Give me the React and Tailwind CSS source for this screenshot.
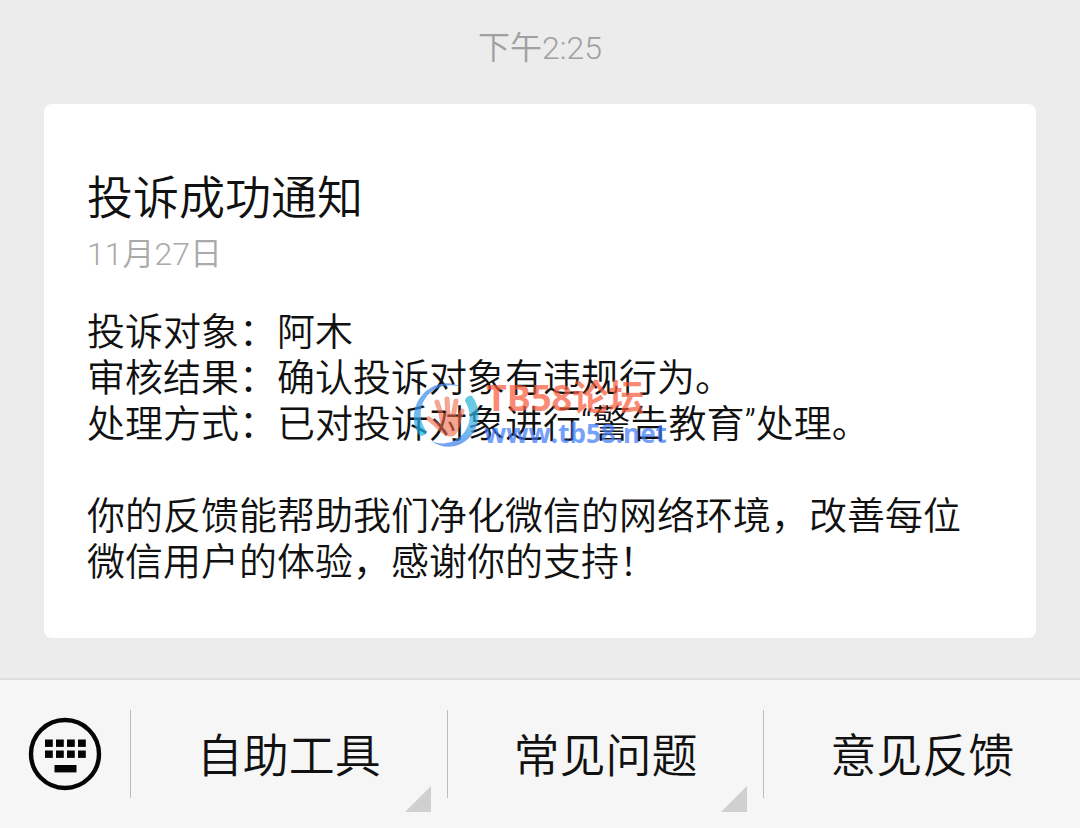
const details = [
  ['投诉对象', '阿木'],
  ['审核结果', '确认投诉对象有违规行为。'],
  ['处理方式', '已对投诉对象进行“警告教育”处理。'],
];

const menu = [
  { label: '自助工具', more: true },
  { label: '常见问题', more: true },
  { label: '意见反馈', more: false },
];

function KeyboardIcon() {
  return (
    <svg viewBox="0 0 74 74" className="size-[74px]" aria-hidden="true">
      <circle cx="37" cy="37" r="34" fill="none" stroke="#050505" strokeWidth="4.4" />
      <g fill="#050505">
        {[17, 28, 39, 50].map((x) => (
          <g key={x}>
            <rect x={x} y="22.5" width="7.8" height="7.4" />
            <rect x={x} y="33.5" width="7.8" height="7.4" />
          </g>
        ))}
        <rect x="26.5" y="48" width="22" height="7.4" />
      </g>
    </svg>
  );
}

function HandLogo() {
  return (
    <svg viewBox="0 0 68 68" className="size-[68px] shrink-0" aria-hidden="true">
      <defs>
        <linearGradient id="ring-left" x1="0" y1="0" x2="0" y2="1">
          <stop offset="0" stopColor="#3a80e8" />
          <stop offset="0.5" stopColor="#3a98ee" />
          <stop offset="1" stopColor="#20b8e4" />
        </linearGradient>
        <linearGradient id="ring-right" x1="0" y1="0" x2="0" y2="1">
          <stop offset="0" stopColor="#20b4d0" />
          <stop offset="0.5" stopColor="#38b4e8" />
          <stop offset="1" stopColor="#3a78e8" />
        </linearGradient>
      </defs>
      <path
        d="M49 8C37 1 22 4 12 14C0 26 -1 44 7 56C10 58 14 56 15 53C7 43 6 28 15 17C24 7 37 4 49 8Z"
        fill="url(#ring-left)"
      />
      <path
        d="M60 17C57 16 53 19 53 22C60 33 59 46 50 56C42 64 30 67 19 62C32 71 47 69 57 59C68 48 70 30 60 17Z"
        fill="url(#ring-right)"
      />
      <g opacity="0.85">
        <g fill="none" stroke="#f0694a" strokeLinecap="round" strokeWidth="5">
          <path d="M30 38L25 23" />
          <path d="M36 38L35 20" />
          <path d="M41 38L44 22" />
          <path d="M46 42L50 32" />
          <path d="M28 48L17 40" />
        </g>
        <path
          d="M27 36C34 33 43 34 49 40C49 47 46 53 42 57C38 58 34 57 31 55C27 52 22 47 18 43C22 43 25 45 28 46Z"
          fill="#f0694a"
        />
      </g>
    </svg>
  );
}

function Watermark() {
  return (
    <div
      aria-hidden="true"
      className="pointer-events-none absolute top-[274px] left-[368px] flex items-center gap-1 whitespace-nowrap font-['Open_Sans','Noto_Sans_CJK_SC',sans-serif] font-bold opacity-70"
    >
      <HandLogo />
      <div>
        <div className="pl-0.5 text-[36px] leading-[40px] text-[#fa5a3c]">TB58论坛</div>
        <div className="text-[26px] leading-[30px] text-[#3c78fa]">www.tb58.net</div>
      </div>
    </div>
  );
}

export default function App() {
  return (
    <div className="flex min-h-screen flex-col bg-[#ececec] font-['Roboto','Noto_Sans_CJK_SC',sans-serif] font-[350] text-[#111]">
      <main className="flex-1 px-11 pt-7 pb-10">
        <time className="block text-center text-[32px] leading-10 text-[#a0a0a0]">下午2:25</time>

        <article className="relative mt-9 rounded-lg bg-white px-[43px] pt-[65px] pb-[53px]">
          <h1 className="text-[46px] leading-[58px]">投诉成功通知</h1>
          <time className="block text-[32px] leading-[54px] text-[#aaa]">11月27日</time>

          <div className="mt-7 text-[38px] leading-[46px]">
            {details.map(([name, value]) => (
              <p key={name}>
                {name}：{value}
              </p>
            ))}
          </div>
          <p className="mt-[46px] text-[38px] leading-[46px]">
            你的反馈能帮助我们净化微信的网络环境，改善每位微信用户的体验，感谢你的支持！
          </p>
          <Watermark />
        </article>
      </main>

      <footer className="flex h-[150px] items-center border-t-2 border-[#dedede] bg-[#f6f6f6]">
        <button type="button" aria-label="键盘" className="flex w-[130px] shrink-0 justify-center">
          <KeyboardIcon />
        </button>
        <nav className="flex flex-1 self-stretch py-[30px]">
          {menu.map(({ label, more }) => (
            <button
              key={label}
              type="button"
              className="relative flex-1 border-l border-[#bdbdbd] pt-1 text-[46px] leading-[60px]"
            >
              {label}
              {more && (
                <svg viewBox="0 0 26 26" className="absolute right-4 -bottom-3.5 size-[26px]" aria-hidden="true">
                  <path d="M26 0V26H0Z" fill="#d0d0d0" />
                </svg>
              )}
            </button>
          ))}
        </nav>
      </footer>
    </div>
  );
}
